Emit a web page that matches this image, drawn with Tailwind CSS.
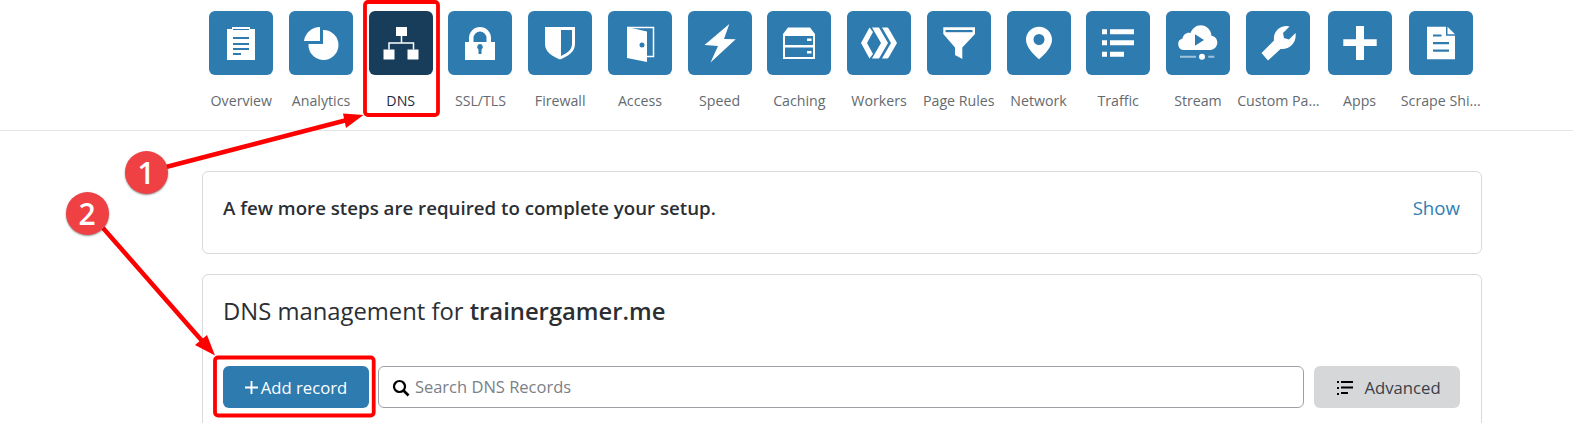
<!DOCTYPE html>
<html>
<head>
<meta charset="utf-8">
<script src="https://cdn.jsdelivr.net/npm/@tailwindcss/browser@4"></script>
</head>
<body class="bg-white overflow-hidden font-['Open_Sans',sans-serif]">
<div class="relative w-[1573px] h-[423px] overflow-hidden">

  <nav class="flex h-[131px] pl-[201.46px] pt-[11px] border-b border-[#e6e6e6] text-[14.2px] leading-[20px] text-[#646a70]">
    <a class="w-[79.73px] flex flex-col items-center gap-[16px]">
      <div class="w-[64px] h-[64px] rounded-[6px] bg-[#2e7bb0]"><svg viewBox="0 0 64 64" class="w-[64px] h-[64px]" fill="#fff"><path d="M18 18h5v-2h18v2h5v31H18z"/><path fill="#2e7bb0" d="M24 26h16v2H24zM24 32h16v2H24zM24 37h16v2H24zM24 42h8v2h-8zM24 18h16v1H24z"/></svg></div>
      <span>Overview</span>
    </a>
    <a class="w-[79.73px] flex flex-col items-center gap-[16px]">
      <div class="w-[64px] h-[64px] rounded-[6px] bg-[#2e7bb0]"><svg viewBox="0 0 64 64" class="w-[64px] h-[64px]" fill="#fff"><path d="M34 19A15 15 0 1 1 19.500 33H34z"/><path d="M31 16v14H15C16 22 23 16 31 16z"/></svg></div>
      <span>Analytics</span>
    </a>
    <a class="w-[79.73px] flex flex-col items-center gap-[16px]">
      <div class="w-[64px] h-[64px] rounded-[6px] bg-[#173d5a]"><svg viewBox="0 0 64 64" class="w-[64px] h-[64px]" fill="#fff"><path d="M27 16h11v9H27zM14.500 38.500h11v10h-11zM38.500 38.500h11v10h-11z"/><path fill="none" stroke="#fff" stroke-width="1.500" d="M32.500 25v7M20 38.500V32h24.500v6.500"/></svg></div>
      <span class="text-[#1f2b38]">DNS</span>
    </a>
    <a class="w-[79.73px] flex flex-col items-center gap-[16px]">
      <div class="w-[64px] h-[64px] rounded-[6px] bg-[#2e7bb0]"><svg viewBox="0 0 64 64" class="w-[64px] h-[64px]" fill="#fff"><path fill-rule="evenodd" d="M17 31h4v-4a11 11 0 0 1 22 0v4h4v18H17zM25.500 31h13v-4a6.500 6.500 0 0 0-13 0z"/><path fill="#2e7bb0" d="M32 33a3 3 0 0 1 1.500 5.500V43h-3v-4.500A3 3 0 0 1 32 33z"/></svg></div>
      <span>SSL/TLS</span>
    </a>
    <a class="w-[79.73px] flex flex-col items-center gap-[16px]">
      <div class="w-[64px] h-[64px] rounded-[6px] bg-[#2e7bb0]"><svg viewBox="0 0 64 64" class="w-[64px] h-[64px]" fill="#fff"><path d="M17 16h30v17c0 8-7 12-15 15.500C24 45 17 41 17 33z"/><path fill="#2e7bb0" d="M33 19h11v14c0 6-5 9-11 12z"/></svg></div>
      <span>Firewall</span>
    </a>
    <a class="w-[79.73px] flex flex-col items-center gap-[16px]">
      <div class="w-[64px] h-[64px] rounded-[6px] bg-[#2e7bb0]"><svg viewBox="0 0 64 64" class="w-[64px] h-[64px]" fill="#fff"><path d="M19 16l20 4.500V51l-20-4z"/><path fill="none" stroke="#fff" stroke-width="1.500" d="M19 16.500h26.500v29H39"/><circle cx="34" cy="34" r="2.500" fill="#2e7bb0"/></svg></div>
      <span>Access</span>
    </a>
    <a class="w-[79.73px] flex flex-col items-center gap-[16px]">
      <div class="w-[64px] h-[64px] rounded-[6px] bg-[#2e7bb0]"><svg viewBox="0 0 64 64" class="w-[64px] h-[64px]" fill="#fff"><path d="M41.300 13L16.500 34l13.500 1-7.500 16.500L47.700 28.300 36 28z"/></svg></div>
      <span>Speed</span>
    </a>
    <a class="w-[79.73px] flex flex-col items-center gap-[16px]">
      <div class="w-[64px] h-[64px] rounded-[6px] bg-[#2e7bb0]"><svg viewBox="0 0 64 64" class="w-[64px] h-[64px]" fill="#fff"><path d="M21 16.500h22l5 6.500H16z"/><path fill="none" stroke="#fff" stroke-width="2" d="M17 24h30v11H17zM17 35.500h30V47H17z"/><path d="M40 27.500h4.500V30H40zM40 40h4.500v2.500H40z"/></svg></div>
      <span>Caching</span>
    </a>
    <a class="w-[79.73px] flex flex-col items-center gap-[16px]">
      <div class="w-[64px] h-[64px] rounded-[6px] bg-[#2e7bb0]"><svg viewBox="0 0 64 64" class="w-[64px] h-[64px]" fill="#fff"><path d="M14 32l8.500-15.500 3.500 4.500-6 11 6 11-3.500 4.500zM25 16.500h7L41 32l-9 15.500h-7L34 32zM35 16.500h4.500c1 0 1.800.5 2.300 1.300L50 32l-8.200 14.200c-.5.8-1.300 1.300-2.300 1.300H35L44 32z"/></svg></div>
      <span>Workers</span>
    </a>
    <a class="w-[79.73px] flex flex-col items-center gap-[16px]">
      <div class="w-[64px] h-[64px] rounded-[6px] bg-[#2e7bb0]"><svg viewBox="0 0 64 64" class="w-[64px] h-[64px]" fill="#fff"><path d="M16.300 16.300h31.700V23L35.300 36.500V48L28 44V36.500L16.300 23z"/><path fill="#2e7bb0" d="M18.500 19h27v2.200h-27z"/></svg></div>
      <span class="whitespace-nowrap">Page Rules</span>
    </a>
    <a class="w-[79.73px] flex flex-col items-center gap-[16px]">
      <div class="w-[64px] h-[64px] rounded-[6px] bg-[#2e7bb0]"><svg viewBox="0 0 64 64" class="w-[64px] h-[64px]" fill="#fff"><path fill-rule="evenodd" d="M32 15.700c7.200 0 13 5.800 13 13 0 7-7 14.500-13 19.600-6-5.100-13-12.600-13-19.600 0-7.200 5.800-13 13-13zM32 23a5.500 5.500 0 1 0 0 11 5.500 5.500 0 0 0 0-11z"/></svg></div>
      <span>Network</span>
    </a>
    <a class="w-[79.73px] flex flex-col items-center gap-[16px]">
      <div class="w-[64px] h-[64px] rounded-[6px] bg-[#2e7bb0]"><svg viewBox="0 0 64 64" class="w-[64px] h-[64px]" fill="#fff"><path d="M16 18.300h5v5h-5zM24 18.300h24v5H24zM16 29.300h5v5h-5zM24 29.300h24v5H24zM16 40.700h5v5h-5zM24 40.700h14v5H24z"/></svg></div>
      <span>Traffic</span>
    </a>
    <a class="w-[79.73px] flex flex-col items-center gap-[16px]">
      <div class="w-[64px] h-[64px] rounded-[6px] bg-[#2e7bb0]"><svg viewBox="0 0 64 64" class="w-[64px] h-[64px]" fill="#fff"><path d="M18 39a5.800 5.800 0 0 1-1.500-11.400C17 23.500 21 21 24.500 22c2-4.500 5.500-7.700 10-7.700 6 0 10.500 4.500 11 10.500 3.200.5 5.800 3 5.800 6.800 0 4-3 7.400-7 7.400z"/><path fill="#2e7bb0" d="M29 23.300l9 5.700-9 5.700z"/><path opacity=".55" d="M14 44.700h16v2H14zM42.300 44.700h6v2h-6z"/><circle cx="36" cy="45.700" r="3"/></svg></div>
      <span>Stream</span>
    </a>
    <a class="w-[81.2px] flex flex-col items-center gap-[16px]">
      <div class="w-[64px] h-[64px] rounded-[6px] bg-[#2e7bb0]"><svg viewBox="0 0 64 64" class="w-[64px] h-[64px]" fill="#fff"><path d="M15.500 42L28 29.500C27 22 32 15 41 15l2.500.5L37 22l1 5 5 1.500 6.500-6.500C51 31 44 39 34.500 38L22 49.500z"/></svg></div>
      <span class="whitespace-nowrap">Custom Pa...</span>
    </a>
    <a class="w-[81.2px] flex flex-col items-center gap-[16px]">
      <div class="w-[64px] h-[64px] rounded-[6px] bg-[#2e7bb0]"><svg viewBox="0 0 64 64" class="w-[64px] h-[64px]" fill="#fff"><path d="M28 15h8v13.300h12.700V35H36v14h-8V35H15.300v-6.700H28z"/></svg></div>
      <span>Apps</span>
    </a>
    <a class="w-[81.2px] flex flex-col items-center gap-[16px]">
      <div class="w-[64px] h-[64px] rounded-[6px] bg-[#2e7bb0]"><svg viewBox="0 0 64 64" class="w-[64px] h-[64px]" fill="#fff"><path d="M18 15.700h19v9h9v23.600H18z"/><path d="M38.500 15.700l7.500 7.500h-7.500z"/><path fill="#2e7bb0" d="M24 23.500h8.500v2H24zM24 31h16v2.200H24zM24 38.500h16v2.200H24z"/></svg></div>
      <span class="whitespace-nowrap">Scrape Shi...</span>
    </a>
  </nav>

  <main class="ml-[202px] w-[1280px] pt-[40px] flex flex-col gap-[20px]">
    <section class="h-[83px] rounded-[6px] border border-[#d9dadb] pl-[20px] pr-[21px] pt-[22px] flex justify-between items-start">
      <p class="text-[18.7px] leading-[28px] font-semibold text-[#2b2f33]">A few more steps are required to complete your setup.</p>
      <a class="text-[18.66px] leading-[28px] text-[#2f7fb5]">Show</a>
    </section>
    <section class="h-[200px] rounded-[6px] border border-[#d9dadb] pl-[20px] pr-[21px] pt-[20px]">
      <h2 class="text-[23.8px] leading-[32px] text-[#2b2f33]">DNS management for <strong class="font-semibold">trainergamer.me</strong></h2>
      <div class="flex mt-[39px] gap-[9px]">
        <button class="w-[146px] h-[42px] rounded-[6px] bg-[#2e7bb0] text-white text-[16.7px] flex items-center justify-center gap-[3px] pt-[1px]">
          <svg viewBox="0 0 14 14" class="w-[13px] h-[13px]"><path fill="#fff" d="M6 0h2v6h6v2H8v6H6V8H0V6h6z"/></svg>
          <span>Add record</span>
        </button>
        <div class="w-[927px] h-[42px] rounded-[6px] border border-[#9da1a5] flex items-center pl-[13px] gap-[5px] pt-[1px]">
          <svg viewBox="0 0 18 18" class="w-[18px] h-[18px]"><circle cx="7.500" cy="7.500" r="5.500" fill="none" stroke="#000" stroke-width="2.200"/><path stroke="#000" stroke-width="2.600" d="M11.500 11.500l5 5"/></svg>
          <span class="text-[16.5px] text-[#7b8086]">Search DNS Records</span>
        </div>
        <button class="ml-[1px] w-[146px] h-[42px] rounded-[6px] bg-[#d6d7d9] text-[#3a4048] text-[16.7px] flex items-center justify-center gap-[11px] pl-[4px] pt-[1px]">
          <svg viewBox="0 0 16 14" class="w-[16px] h-[14px]"><path fill="#000" d="M0 0h2v2H0zM4 0h12v2H4zM0 6h2v2H0zM4 5.500h12v2H4zM0 12h2v2H0zM4 11h7v2H4z"/></svg>
          <span>Advanced</span>
        </button>
      </div>
    </section>
  </main>

  <svg class="absolute inset-0 w-[1573px] h-[423px] pointer-events-none" viewBox="0 0 1573 423" fill="none">
    <rect x="365" y="2" width="73" height="113" rx="3" stroke="#f00" stroke-width="3.800"/>
    <rect x="215" y="357.500" width="158.700" height="58" rx="3" stroke="#f00" stroke-width="3.800"/>
    <path d="M166 167L347 120" stroke="#f00" stroke-width="4.500"/>
    <path d="M363.500 115L343 113.500 346 128z" fill="#f00"/>
    <path d="M103 228L203 342" stroke="#f00" stroke-width="4.500"/>
    <path d="M215 355.500L195 345 207 335z" fill="#f00"/>
  </svg>
  <div class="absolute left-[124.500px] top-[150.500px] w-[43px] h-[43px] rounded-full bg-[#ef4044] shadow-[0_1px_2px_rgba(0,0,0,0.45)] text-white text-[30px] leading-[43px] text-center font-semibold">1</div>
  <div class="absolute left-[65.500px] top-[191.500px] w-[43px] h-[43px] rounded-full bg-[#ef4044] shadow-[0_1px_2px_rgba(0,0,0,0.45)] text-white text-[30px] leading-[43px] text-center font-semibold">2</div>
</div>
</body>
</html>
